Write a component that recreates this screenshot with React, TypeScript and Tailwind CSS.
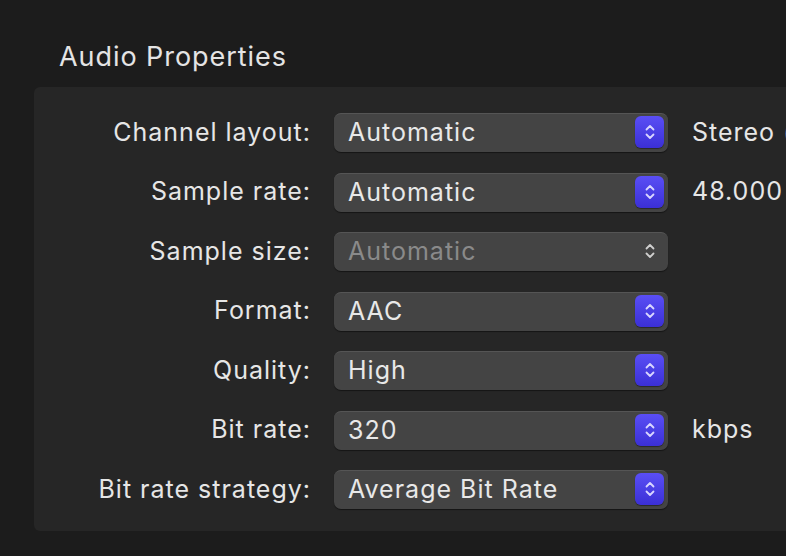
import React from "react";

type Row = { label: string; value: string; extra?: string; disabled?: boolean };

const rows: Row[] = [
  { label: "Channel layout:", value: "Automatic", extra: "Stereo (L R)" },
  { label: "Sample rate:", value: "Automatic", extra: "48.000 kHz" },
  { label: "Sample size:", value: "Automatic", disabled: true },
  { label: "Format:", value: "AAC" },
  { label: "Quality:", value: "High" },
  { label: "Bit rate:", value: "320", extra: "kbps" },
  { label: "Bit rate strategy:", value: "Average Bit Rate" },
];

function Chevrons({ color }: { color: string }) {
  return (
    <svg width="12" height="20" viewBox="0 0 12 20" fill="none">
      <path d="M2.5 7.5 L6 4 L9.5 7.5" stroke={color} strokeWidth="1.8" strokeLinecap="round" strokeLinejoin="round" />
      <path d="M2.5 12.5 L6 16 L9.5 12.5" stroke={color} strokeWidth="1.8" strokeLinecap="round" strokeLinejoin="round" />
    </svg>
  );
}

function Select({ value, disabled }: { value: string; disabled?: boolean }) {
  return (
    <div className="relative flex h-[39px] w-[334px] shrink-0 items-center rounded-[7px] border-t border-[#555555] bg-[#444444] pl-[14px] shadow-[0_1px_1px_rgba(0,0,0,0.45)]">
      <span className={disabled ? "text-[#8a8a8a]" : "text-[#e8e8e8]"}>{value}</span>
      {disabled ? (
        <div className="absolute right-[4px] top-[2px] flex h-[32px] w-[29px] items-center justify-center">
          <Chevrons color="#cfcfcf" />
        </div>
      ) : (
        <div className="absolute right-[4px] top-[2px] flex h-[32px] w-[29px] items-center justify-center rounded-[6px] bg-gradient-to-b from-[#5a4ef5] to-[#3b2fd6] shadow-[0_1px_1px_rgba(0,0,0,0.4)]">
          <Chevrons color="#d9d6ff" />
        </div>
      )}
    </div>
  );
}

export default function App() {
  return (
    <div
      className="h-[556px] w-[786px] overflow-hidden bg-[#1c1c1c] text-[25px] tracking-[0.04em] text-[#e6e6e6]"
      style={{ fontFamily: "Inter, 'Liberation Sans', sans-serif" }}
    >
      <div className="pl-[59px] pt-[41px] text-[27px] leading-[32px] tracking-[0.035em] text-[#e4e4e4]">Audio Properties</div>
      <div className="ml-[34px] mt-[14px] h-[444px] w-[800px] rounded-l-[6px] bg-[#262626] pt-[26px]">
        <div className="flex flex-col gap-[20.5px]">
          {rows.map((r) => (
            <div key={r.label} className="flex h-[39px] items-center whitespace-nowrap">
              <div className="w-[277px] shrink-0 text-right text-[#e6e6e6]">{r.label}</div>
              <div className="ml-[23px]">
                <Select value={r.value} disabled={r.disabled} />
              </div>
              {r.extra && <div className="ml-[24px] text-[#e6e6e6]">{r.extra}</div>}
            </div>
          ))}
        </div>
      </div>
    </div>
  );
}
